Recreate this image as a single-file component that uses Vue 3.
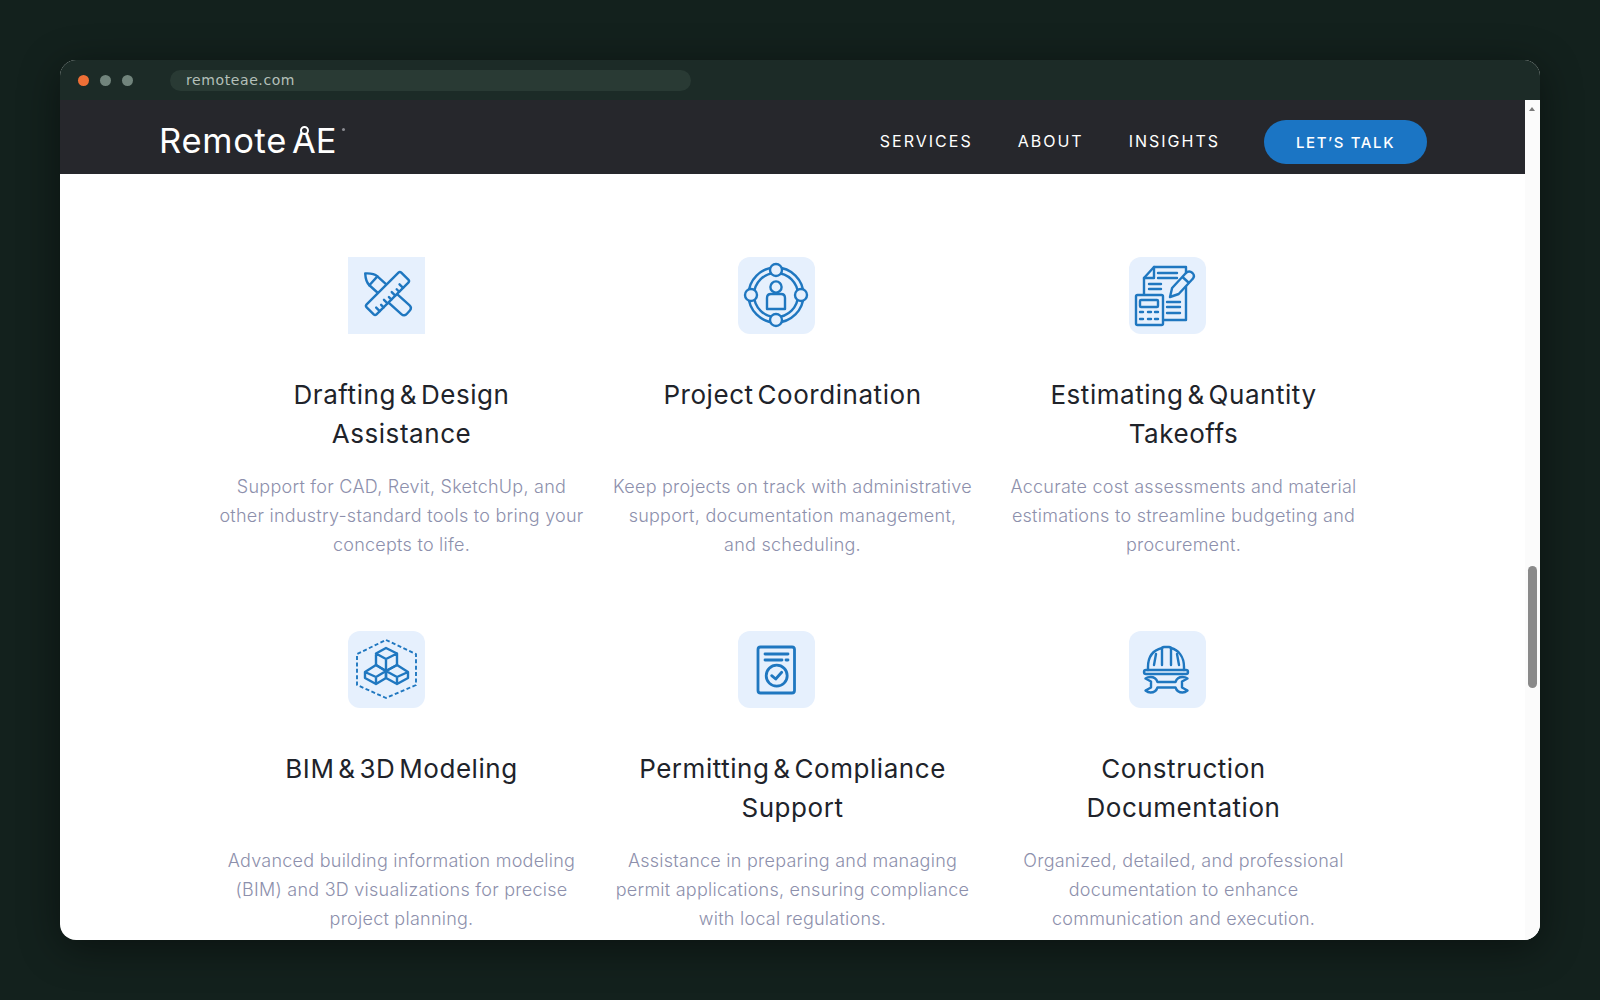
<template>
  <div class="window">
    <div class="titlebar">
      <span class="dot dot-orange"></span>
      <span class="dot"></span>
      <span class="dot"></span>
      <div class="urlbar">remoteae.com</div>
    </div>
    <div class="viewport">
      <div class="page">
        <header class="site-header">
          <div class="logo">
            <span>Remote</span>
            <span class="logo-ae"><span class="compass"></span>AE</span>
            <span class="logo-mark"></span>
          </div>
          <nav class="nav">
            <a>SERVICES</a>
            <a>ABOUT</a>
            <a>INSIGHTS</a>
            <button class="cta">LET’S TALK</button>
          </nav>
        </header>
        <main class="services">
          <section v-for="card in cards" :key="card.icon" class="card">
            <div class="icon-box" :class="{ square: card.icon === 'draft' }">
              <svg v-if="card.icon === 'draft'" viewBox="0 0 77 77" class="icon">
                <g transform="translate(39.5 36.5) rotate(42)">
                  <path d="M-30 0 Q-24 -6 -19 -6 H24 Q28 -6 28 -2 V2 Q28 6 24 6 H-19 Q-24 6 -30 0 Z" />
                  <path d="M-19 -6 V6" />
                </g>
                <g transform="translate(39.5 36.5) rotate(-45)">
                  <rect x="-24.5" y="-7" width="49" height="14" rx="2" class="cover" />
                  <path d="M-18 7 V2 M-12.5 7 V3.5 M-7 7 V2 M-1.5 7 V3.5 M4 7 V2 M9.5 7 V3.5 M15 7 V2" />
                </g>
              </svg>
              <svg v-else-if="card.icon === 'coord'" viewBox="0 0 77 77" class="icon">
                <circle cx="38" cy="38" r="27.5" />
                <circle cx="38" cy="38" r="22" />
                <circle cx="38" cy="13" r="6" class="cover" />
                <circle cx="13" cy="38" r="6" class="cover" />
                <circle cx="63" cy="38" r="6" class="cover" />
                <circle cx="38" cy="63" r="6" class="cover" />
                <circle cx="38" cy="30" r="5.6" />
                <path d="M29 52 V41 Q29 37 33 37 H43 Q47 37 47 41 V52 Z" />
              </svg>
              <svg v-else-if="card.icon === 'estimate'" viewBox="0 0 77 77" class="icon">
                <path d="M25 10 H57 V63 H15 V21 Z" />
                <path d="M25 10 V21 H15" />
                <path d="M29 16 H48 M29 21 H48 M20 27 H32 M20 32 H32 M38 45 H51 M38 50 H51 M38 56 H51" />
                <path d="M41 40 L43.1 31 L56.7 16.3 Q60 13 63.5 16 Q66.5 19 63.3 22.3 L49.7 37 Z M53.5 20 L60 26" class="cover" />
                <rect x="7" y="38" width="27" height="30" rx="1.5" class="cover" />
                <rect x="11" y="43" width="18" height="7" rx="1" />
                <path d="M11 55 H14 M19 55 H22 M26 55 H29 M11 62 H14 M19 62 H22 M26 62 H29" />
              </svg>
              <svg v-else-if="card.icon === 'bim'" viewBox="0 0 77 77" class="icon">
                <path d="M38 9 L68 23 V54 L38 67 L9 54 V23 Z" class="dashed" />
                <path d="M38 17 L49 22.5 V34 L38 40 L28 34 V22.5 Z M28 22.5 L38 28 L49 22.5 M38 28 V40" />
                <path d="M28 34 L38 40 V47 L28 53 L17 47 V41 Z M17 41 L28 46 L38 40 M28 46 V53" />
                <path d="M49 34 L38 40 V47 L49 53 L60 47 V41 Z M60 41 L49 46 L38 40 M49 46 V53" />
              </svg>
              <svg v-else-if="card.icon === 'permit'" viewBox="0 0 77 77" class="icon thick">
                <rect x="20" y="16" width="36.5" height="46" rx="2.5" />
                <path d="M27 23 H50 M27 29 H44 M48 29 H50" />
                <circle cx="38.7" cy="44.7" r="10.5" />
                <path d="M33.7 44.7 L37.7 48 L43.7 41.3" />
              </svg>
              <svg v-else viewBox="0 0 77 77" class="icon">
                <path d="M19 39 V36 C19 25 25 19 33 17 M55 39 V36 C55 25 49 19 42 17" />
                <path d="M33 34 V18 Q33 16 35 16 H40 Q42 16 42 18 V34" />
                <path d="M25 34 L27 23 M50 34 L48 23" />
                <rect x="15" y="39" width="44" height="4" rx="2" />
                <path d="M46.5 51 H28.5 C27.5 48 24.5 46 21.5 46 C19.5 46 18 46.5 16.5 47.5 L22 50.5 V56.5 L16.5 59.5 C18 60.7 19.5 61.5 21.5 61.5 C24.5 61.5 27.5 59.5 28.5 56.5 H46.5 C47.5 59.5 50.5 61.5 53.5 61.5 C55.5 61.5 57 60.7 58.5 59.5 L53 56.5 V50.5 L58.5 47.5 C57 46.5 55.5 46 53.5 46 C50.5 46 47.5 48 46.5 51 Z" />
              </svg>
            </div>
            <h3 class="card-title">{{ card.title }}</h3>
            <p class="card-text">{{ card.text }}</p>
          </section>
        </main>
      </div>
      <div class="scrollbar">
        <span class="arrow"></span>
        <span class="thumb"></span>
      </div>
    </div>
  </div>
</template>

<script setup>
const cards = [
  {
    icon: 'draft',
    title: 'Drafting & Design Assistance',
    text: 'Support for CAD, Revit, SketchUp, and other industry-standard tools to bring your concepts to life.',
  },
  {
    icon: 'coord',
    title: 'Project Coordination',
    text: 'Keep projects on track with administrative support, documentation management, and scheduling.',
  },
  {
    icon: 'estimate',
    title: 'Estimating & Quantity Takeoffs',
    text: 'Accurate cost assessments and material estimations to streamline budgeting and procurement.',
  },
  {
    icon: 'bim',
    title: 'BIM & 3D Modeling',
    text: 'Advanced building information modeling (BIM) and 3D visualizations for precise project planning.',
  },
  {
    icon: 'permit',
    title: 'Permitting & Compliance Support',
    text: 'Assistance in preparing and managing permit applications, ensuring compliance with local regulations.',
  },
  {
    icon: 'construction',
    title: 'Construction Documentation',
    text: 'Organized, detailed, and professional documentation to enhance communication and execution.',
  },
]
</script>

<style>
html,
body {
  margin: 0;
  background: #13211d;
}
</style>

<style scoped>
.window {
  width: 1480px;
  height: 880px;
  margin: 60px;
  border-radius: 16px;
  overflow: hidden;
  display: flex;
  flex-direction: column;
  background: #fff;
  box-shadow: 0 8px 40px rgba(0, 0, 0, 0.45);
  font-family: Inter, "Liberation Sans", sans-serif;
}
.titlebar {
  height: 40px;
  flex: none;
  display: flex;
  align-items: center;
  padding-left: 18px;
  gap: 11px;
  background: #1c2b27;
}
.dot {
  width: 11px;
  height: 11px;
  border-radius: 50%;
  background: #71847c;
}
.dot-orange {
  background: #ee6f36;
}
.urlbar {
  width: 505px;
  height: 21px;
  margin-left: 26px;
  padding-left: 16px;
  border-radius: 11px;
  background: #293a34;
  color: #b4c0ba;
  font-family: "DejaVu Sans", sans-serif;
  font-size: 14px;
  letter-spacing: 0.6px;
  line-height: 21px;
}
.viewport {
  flex: 1;
  display: flex;
  min-height: 0;
}
.page {
  flex: 1;
  min-width: 0;
  overflow: hidden;
}
.site-header {
  height: 74px;
  box-sizing: border-box;
  padding: 10px 98px 0 99px;
  display: flex;
  align-items: center;
  justify-content: space-between;
  background: #26272c;
  color: #fff;
}
.logo {
  display: flex;
  align-items: baseline;
  gap: 5px;
  font-size: 34.5px;
  font-weight: 400;
  letter-spacing: 0.7px;
  position: relative;
  top: -2px;
}
.logo-ae {
  position: relative;
  letter-spacing: 0;
}
.compass {
  position: absolute;
  left: 8px;
  top: 6px;
  width: 5px;
  height: 5px;
  border: 2px solid #fff;
  border-radius: 50%;
  background: #26272c;
}
.logo-mark {
  position: absolute;
  right: -8px;
  top: 8px;
  width: 3px;
  height: 3px;
  border-radius: 50%;
  background: #8b8c92;
}
.nav {
  display: flex;
  align-items: center;
  gap: 45px;
  font-size: 16px;
  font-weight: 400;
  letter-spacing: 2px;
}
.nav a {
  margin-bottom: 2px;
}
.cta {
  width: 163px;
  height: 44px;
  margin-left: -1px;
  border: none;
  border-radius: 22px;
  background: #1b75c4;
  color: #fff;
  font: inherit;
  font-size: 15px;
  font-weight: 500;
  letter-spacing: 1.6px;
}
.services {
  padding: 83px 159px 0;
  display: grid;
  grid-template-columns: repeat(3, 365px);
  column-gap: 26px;
  row-gap: 71px;
}
.card {
  text-align: center;
}
.icon-box {
  width: 77px;
  height: 77px;
  margin-left: calc(50% - 55px);
  border-radius: 12px;
  background: #e6f0fd;
}
.card:nth-child(3n + 1) .icon-box {
  margin-left: calc(50% - 53.5px);
}
.icon-box.square {
  border-radius: 0;
}
.icon {
  display: block;
  width: 77px;
  height: 77px;
  fill: none;
  stroke: #1f77c0;
  stroke-width: 2.4;
  stroke-linejoin: round;
  stroke-linecap: round;
}
.icon.thick {
  stroke-width: 2.8;
}
.dashed {
  stroke-width: 1.9;
  stroke-linecap: butt;
  stroke-dasharray: 4 2.4;
}
.cover {
  fill: #e6f0fd;
}
.card-title {
  height: 78px;
  margin: 41px 0 20.4px;
  padding: 0 20px;
  color: #20232a;
  font-size: 26px;
  font-weight: 400;
  line-height: 39px;
  letter-spacing: 0.55px;
  word-spacing: -4px;
}
.card-text {
  margin: 0;
  color: #8d90ac;
  font-size: 18px;
  font-weight: 300;
  line-height: 28.8px;
  letter-spacing: 0.25px;
}
.scrollbar {
  width: 15px;
  flex: none;
  position: relative;
  background: #fbfbfb;
}
.arrow {
  position: absolute;
  left: 4px;
  top: 7px;
  border-left: 3.5px solid transparent;
  border-right: 3.5px solid transparent;
  border-bottom: 4px solid #7a7a7a;
}
.thumb {
  position: absolute;
  left: 3px;
  top: 466px;
  width: 9px;
  height: 122px;
  border-radius: 5px;
  background: #8a8a8a;
}
</style>
